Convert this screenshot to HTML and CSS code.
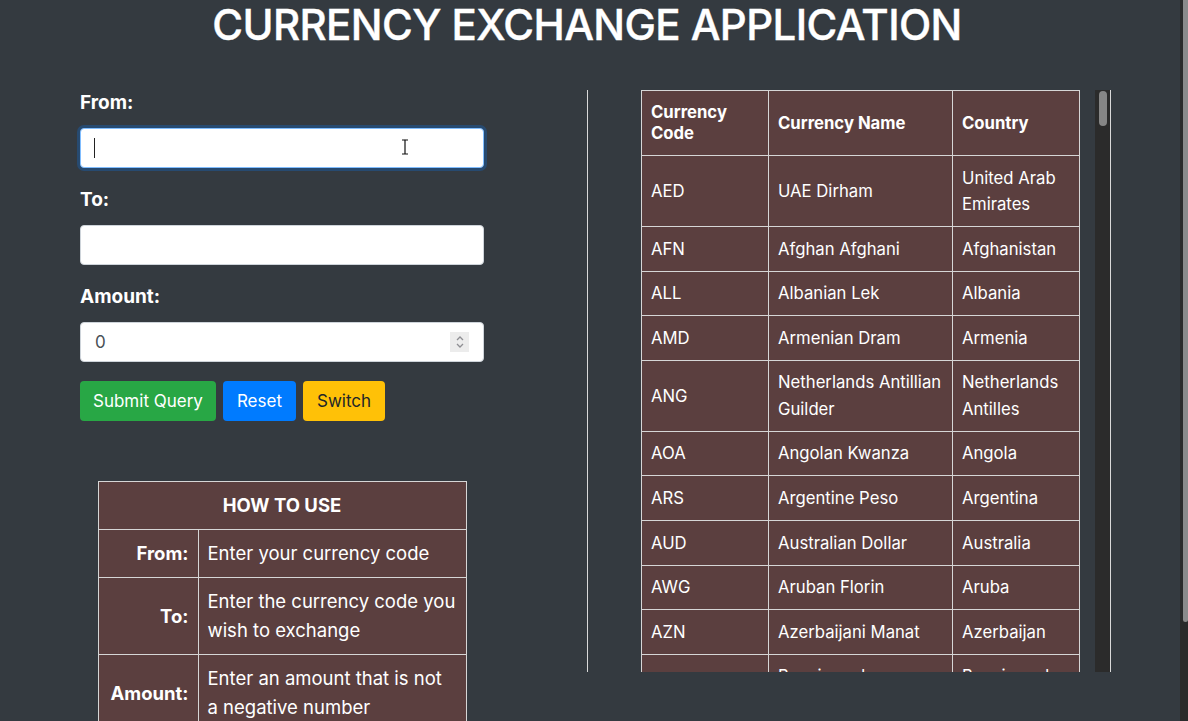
FILE: index.html
```html
<!DOCTYPE html>
<html lang="en">
<head>
<meta charset="utf-8">
<title>Currency Exchange Application</title>
<link rel="stylesheet" href="styles.css">
</head>
<body>
<div class="page-scroll"><div class="page-thumb"></div></div>
<h1 class="title">CURRENCY EXCHANGE APPLICATION</h1>
<main class="layout">
  <section class="left">
    <div class="left-inner">
      <form class="form">
        <div class="group">
          <label class="label" for="from">From:</label>
          <div class="field-wrap">
            <input class="field field-focus" id="from" type="text">
            <span class="caret"></span>
            <svg class="ibeam" width="8" height="16" viewBox="0 0 8 16"><path d="M1 1h2.5l.5.5.5-.5H7M4 1.5v13M1 15h2.5l.5-.5.5.5H7" fill="none" stroke="#111" stroke-width="1.2"/></svg>
          </div>
        </div>
        <div class="group">
          <label class="label" for="to">To:</label>
          <div class="field-wrap">
            <input class="field" id="to" type="text">
          </div>
        </div>
        <div class="group">
          <label class="label" for="amount">Amount:</label>
          <div class="field-wrap">
            <input class="field" id="amount" type="number" value="0">
            <span class="spin"><svg width="10" height="16" viewBox="0 0 10 16"><path d="M2 6l3-3 3 3M2 10l3 3 3-3" fill="none" stroke="#8e8e93" stroke-width="1.3"/></svg></span>
          </div>
        </div>
        <div class="buttons">
          <button type="button" class="btn btn-green">Submit Query</button>
          <button type="button" class="btn btn-blue">Reset</button>
          <button type="button" class="btn btn-yellow">Switch</button>
        </div>
      </form>
      <table class="howto">
        <tr><th colspan="2" class="howto-head">HOW TO USE</th></tr>
        <tr><th class="howto-key">From:</th><td>Enter your currency code</td></tr>
        <tr><th class="howto-key">To:</th><td>Enter the currency code you wish to exchange</td></tr>
        <tr><th class="howto-key">Amount:</th><td>Enter an amount that is not a negative number</td></tr>
      </table>
    </div>
  </section>
  <section class="right">
    <div class="scroller">
      <table class="codes">
        <thead>
          <tr><th class="c1">Currency Code</th><th class="c2">Currency Name</th><th class="c3">Country</th></tr>
        </thead>
        <tbody>
<tr><td>AED</td><td>UAE Dirham</td><td>United Arab Emirates</td></tr>
<tr><td>AFN</td><td>Afghan Afghani</td><td>Afghanistan</td></tr>
<tr><td>ALL</td><td>Albanian Lek</td><td>Albania</td></tr>
<tr><td>AMD</td><td>Armenian Dram</td><td>Armenia</td></tr>
<tr><td>ANG</td><td>Netherlands Antillian Guilder</td><td>Netherlands Antilles</td></tr>
<tr><td>AOA</td><td>Angolan Kwanza</td><td>Angola</td></tr>
<tr><td>ARS</td><td>Argentine Peso</td><td>Argentina</td></tr>
<tr><td>AUD</td><td>Australian Dollar</td><td>Australia</td></tr>
<tr><td>AWG</td><td>Aruban Florin</td><td>Aruba</td></tr>
<tr><td>AZN</td><td>Azerbaijani Manat</td><td>Azerbaijan</td></tr>
<tr><td>BAM</td><td>Bosnia and Herzegovina Mark</td><td>Bosnia and Herzegovina</td></tr>
<tr><td>BBD</td><td>Barbados Dollar</td><td>Barbados</td></tr>
<tr><td>BDT</td><td>Bangladeshi Taka</td><td>Bangladesh</td></tr>
<tr><td>BGN</td><td>Bulgarian Lev</td><td>Bulgaria</td></tr>
<tr><td>BHD</td><td>Bahraini Dinar</td><td>Bahrain</td></tr>
<tr><td>BIF</td><td>Burundian Franc</td><td>Burundi</td></tr>
<tr><td>BMD</td><td>Bermudian Dollar</td><td>Bermuda</td></tr>
<tr><td>BND</td><td>Brunei Dollar</td><td>Brunei</td></tr>
<tr><td>BOB</td><td>Bolivian Boliviano</td><td>Bolivia</td></tr>
<tr><td>BRL</td><td>Brazilian Real</td><td>Brazil</td></tr>
<tr><td>BSD</td><td>Bahamian Dollar</td><td>Bahamas</td></tr>
<tr><td>BTN</td><td>Bhutanese Ngultrum</td><td>Bhutan</td></tr>
<tr><td>BWP</td><td>Botswana Pula</td><td>Botswana</td></tr>
<tr><td>BYN</td><td>Belarusian Ruble</td><td>Belarus</td></tr>
<tr><td>BZD</td><td>Belize Dollar</td><td>Belize</td></tr>
<tr><td>CAD</td><td>Canadian Dollar</td><td>Canada</td></tr>
<tr><td>CDF</td><td>Congolese Franc</td><td>Democratic Republic of the Congo</td></tr>
<tr><td>CHF</td><td>Swiss Franc</td><td>Switzerland</td></tr>
<tr><td>CLP</td><td>Chilean Peso</td><td>Chile</td></tr>
<tr><td>CNY</td><td>Chinese Renminbi</td><td>China</td></tr>
<tr><td>COP</td><td>Colombian Peso</td><td>Colombia</td></tr>
<tr><td>CRC</td><td>Costa Rican Colon</td><td>Costa Rica</td></tr>
<tr><td>CUP</td><td>Cuban Peso</td><td>Cuba</td></tr>
<tr><td>CVE</td><td>Cape Verdean Escudo</td><td>Cape Verde</td></tr>
<tr><td>CZK</td><td>Czech Koruna</td><td>Czech Republic</td></tr>
<tr><td>DJF</td><td>Djiboutian Franc</td><td>Djibouti</td></tr>
<tr><td>DKK</td><td>Danish Krone</td><td>Denmark</td></tr>
<tr><td>DOP</td><td>Dominican Peso</td><td>Dominican Republic</td></tr>
<tr><td>DZD</td><td>Algerian Dinar</td><td>Algeria</td></tr>
<tr><td>EGP</td><td>Egyptian Pound</td><td>Egypt</td></tr>
<tr><td>ERN</td><td>Eritrean Nakfa</td><td>Eritrea</td></tr>
<tr><td>ETB</td><td>Ethiopian Birr</td><td>Ethiopia</td></tr>
<tr><td>EUR</td><td>Euro</td><td>European Union</td></tr>
<tr><td>FJD</td><td>Fiji Dollar</td><td>Fiji</td></tr>
<tr><td>FKP</td><td>Falkland Islands Pound</td><td>Falkland Islands</td></tr>
<tr><td>FOK</td><td>Faroese Króna</td><td>Faroe Islands</td></tr>
<tr><td>GBP</td><td>Pound Sterling</td><td>United Kingdom</td></tr>
<tr><td>GEL</td><td>Georgian Lari</td><td>Georgia</td></tr>
<tr><td>GGP</td><td>Guernsey Pound</td><td>Guernsey</td></tr>
<tr><td>GHS</td><td>Ghanaian Cedi</td><td>Ghana</td></tr>
<tr><td>GIP</td><td>Gibraltar Pound</td><td>Gibraltar</td></tr>
<tr><td>GMD</td><td>Gambian Dalasi</td><td>The Gambia</td></tr>
<tr><td>GNF</td><td>Guinean Franc</td><td>Guinea</td></tr>
<tr><td>GTQ</td><td>Guatemalan Quetzal</td><td>Guatemala</td></tr>
<tr><td>GYD</td><td>Guyanese Dollar</td><td>Guyana</td></tr>
<tr><td>HKD</td><td>Hong Kong Dollar</td><td>Hong Kong</td></tr>
<tr><td>HNL</td><td>Honduran Lempira</td><td>Honduras</td></tr>
<tr><td>HRK</td><td>Croatian Kuna</td><td>Croatia</td></tr>
<tr><td>HTG</td><td>Haitian Gourde</td><td>Haiti</td></tr>
<tr><td>HUF</td><td>Hungarian Forint</td><td>Hungary</td></tr>
<tr><td>IDR</td><td>Indonesian Rupiah</td><td>Indonesia</td></tr>
<tr><td>ILS</td><td>Israeli New Shekel</td><td>Israel</td></tr>
<tr><td>IMP</td><td>Manx Pound</td><td>Isle of Man</td></tr>
<tr><td>INR</td><td>Indian Rupee</td><td>India</td></tr>
<tr><td>IQD</td><td>Iraqi Dinar</td><td>Iraq</td></tr>
<tr><td>IRR</td><td>Iranian Rial</td><td>Iran</td></tr>
<tr><td>ISK</td><td>Icelandic Króna</td><td>Iceland</td></tr>
<tr><td>JEP</td><td>Jersey Pound</td><td>Jersey</td></tr>
<tr><td>JMD</td><td>Jamaican Dollar</td><td>Jamaica</td></tr>
<tr><td>JOD</td><td>Jordanian Dinar</td><td>Jordan</td></tr>
<tr><td>JPY</td><td>Japanese Yen</td><td>Japan</td></tr>
<tr><td>KES</td><td>Kenyan Shilling</td><td>Kenya</td></tr>
<tr><td>KGS</td><td>Kyrgyzstani Som</td><td>Kyrgyzstan</td></tr>
<tr><td>KHR</td><td>Cambodian Riel</td><td>Cambodia</td></tr>
<tr><td>KID</td><td>Kiribati Dollar</td><td>Kiribati</td></tr>
<tr><td>KMF</td><td>Comorian Franc</td><td>Comoros</td></tr>
<tr><td>KRW</td><td>South Korean Won</td><td>South Korea</td></tr>
<tr><td>KWD</td><td>Kuwaiti Dinar</td><td>Kuwait</td></tr>
<tr><td>KYD</td><td>Cayman Islands Dollar</td><td>Cayman Islands</td></tr>
<tr><td>KZT</td><td>Kazakhstani Tenge</td><td>Kazakhstan</td></tr>
<tr><td>LAK</td><td>Lao Kip</td><td>Laos</td></tr>
<tr><td>LBP</td><td>Lebanese Pound</td><td>Lebanon</td></tr>
<tr><td>LKR</td><td>Sri Lanka Rupee</td><td>Sri Lanka</td></tr>
<tr><td>LRD</td><td>Liberian Dollar</td><td>Liberia</td></tr>
<tr><td>LSL</td><td>Lesotho Loti</td><td>Lesotho</td></tr>
<tr><td>LYD</td><td>Libyan Dinar</td><td>Libya</td></tr>
<tr><td>MAD</td><td>Moroccan Dirham</td><td>Morocco</td></tr>
<tr><td>MDL</td><td>Moldovan Leu</td><td>Moldova</td></tr>
<tr><td>MGA</td><td>Malagasy Ariary</td><td>Madagascar</td></tr>
<tr><td>MKD</td><td>Macedonian Denar</td><td>North Macedonia</td></tr>
<tr><td>MMK</td><td>Burmese Kyat</td><td>Myanmar</td></tr>
<tr><td>MNT</td><td>Mongolian Tögrög</td><td>Mongolia</td></tr>
<tr><td>MOP</td><td>Macanese Pataca</td><td>Macau</td></tr>
<tr><td>MRU</td><td>Mauritanian Ouguiya</td><td>Mauritania</td></tr>
<tr><td>MUR</td><td>Mauritian Rupee</td><td>Mauritius</td></tr>
<tr><td>MVR</td><td>Maldivian Rufiyaa</td><td>Maldives</td></tr>
<tr><td>MWK</td><td>Malawian Kwacha</td><td>Malawi</td></tr>
<tr><td>MXN</td><td>Mexican Peso</td><td>Mexico</td></tr>
<tr><td>MYR</td><td>Malaysian Ringgit</td><td>Malaysia</td></tr>
<tr><td>MZN</td><td>Mozambican Metical</td><td>Mozambique</td></tr>
<tr><td>NAD</td><td>Namibian Dollar</td><td>Namibia</td></tr>
<tr><td>NGN</td><td>Nigerian Naira</td><td>Nigeria</td></tr>
<tr><td>NIO</td><td>Nicaraguan Córdoba</td><td>Nicaragua</td></tr>
<tr><td>NOK</td><td>Norwegian Krone</td><td>Norway</td></tr>
<tr><td>NPR</td><td>Nepalese Rupee</td><td>Nepal</td></tr>
<tr><td>NZD</td><td>New Zealand Dollar</td><td>New Zealand</td></tr>
<tr><td>OMR</td><td>Omani Rial</td><td>Oman</td></tr>
<tr><td>PAB</td><td>Panamanian Balboa</td><td>Panama</td></tr>
<tr><td>PEN</td><td>Peruvian Sol</td><td>Peru</td></tr>
<tr><td>PGK</td><td>Papua New Guinean Kina</td><td>Papua New Guinea</td></tr>
<tr><td>PHP</td><td>Philippine Peso</td><td>Philippines</td></tr>
<tr><td>PKR</td><td>Pakistani Rupee</td><td>Pakistan</td></tr>
<tr><td>PLN</td><td>Polish Złoty</td><td>Poland</td></tr>
<tr><td>PYG</td><td>Paraguayan Guaraní</td><td>Paraguay</td></tr>
<tr><td>QAR</td><td>Qatari Riyal</td><td>Qatar</td></tr>
<tr><td>RON</td><td>Romanian Leu</td><td>Romania</td></tr>
<tr><td>RSD</td><td>Serbian Dinar</td><td>Serbia</td></tr>
<tr><td>RUB</td><td>Russian Ruble</td><td>Russia</td></tr>
<tr><td>RWF</td><td>Rwandan Franc</td><td>Rwanda</td></tr>
<tr><td>SAR</td><td>Saudi Riyal</td><td>Saudi Arabia</td></tr>
<tr><td>SBD</td><td>Solomon Islands Dollar</td><td>Solomon Islands</td></tr>
<tr><td>SCR</td><td>Seychellois Rupee</td><td>Seychelles</td></tr>
<tr><td>SDG</td><td>Sudanese Pound</td><td>Sudan</td></tr>
<tr><td>SEK</td><td>Swedish Krona</td><td>Sweden</td></tr>
<tr><td>SGD</td><td>Singapore Dollar</td><td>Singapore</td></tr>
<tr><td>SHP</td><td>Saint Helena Pound</td><td>Saint Helena</td></tr>
<tr><td>SLE</td><td>Sierra Leonean Leone</td><td>Sierra Leone</td></tr>
<tr><td>SOS</td><td>Somali Shilling</td><td>Somalia</td></tr>
<tr><td>SRD</td><td>Surinamese Dollar</td><td>Suriname</td></tr>
<tr><td>SSP</td><td>South Sudanese Pound</td><td>South Sudan</td></tr>
<tr><td>STN</td><td>São Tomé and Príncipe Dobra</td><td>São Tomé and Príncipe</td></tr>
<tr><td>SYP</td><td>Syrian Pound</td><td>Syria</td></tr>
<tr><td>SZL</td><td>Eswatini Lilangeni</td><td>Eswatini</td></tr>
<tr><td>THB</td><td>Thai Baht</td><td>Thailand</td></tr>
<tr><td>TJS</td><td>Tajikistani Somoni</td><td>Tajikistan</td></tr>
<tr><td>TMT</td><td>Turkmenistan Manat</td><td>Turkmenistan</td></tr>
<tr><td>TND</td><td>Tunisian Dinar</td><td>Tunisia</td></tr>
<tr><td>TOP</td><td>Tongan Paʻanga</td><td>Tonga</td></tr>
<tr><td>TRY</td><td>Turkish Lira</td><td>Turkey</td></tr>
<tr><td>TTD</td><td>Trinidad and Tobago Dollar</td><td>Trinidad and Tobago</td></tr>
<tr><td>TVD</td><td>Tuvaluan Dollar</td><td>Tuvalu</td></tr>
<tr><td>TWD</td><td>New Taiwan Dollar</td><td>Taiwan</td></tr>
<tr><td>TZS</td><td>Tanzanian Shilling</td><td>Tanzania</td></tr>
<tr><td>UAH</td><td>Ukrainian Hryvnia</td><td>Ukraine</td></tr>
<tr><td>UGX</td><td>Ugandan Shilling</td><td>Uganda</td></tr>
<tr><td>USD</td><td>United States Dollar</td><td>United States</td></tr>
<tr><td>UYU</td><td>Uruguayan Peso</td><td>Uruguay</td></tr>
<tr><td>UZS</td><td>Uzbekistani So'm</td><td>Uzbekistan</td></tr>
<tr><td>VES</td><td>Venezuelan Bolívar Soberano</td><td>Venezuela</td></tr>
<tr><td>VND</td><td>Vietnamese Đồng</td><td>Vietnam</td></tr>
<tr><td>VUV</td><td>Vanuatu Vatu</td><td>Vanuatu</td></tr>
<tr><td>WST</td><td>Samoan Tālā</td><td>Samoa</td></tr>
<tr><td>XAF</td><td>Central African CFA Franc</td><td>CEMAC</td></tr>
<tr><td>XCD</td><td>East Caribbean Dollar</td><td>Organisation of Eastern Caribbean States</td></tr>
<tr><td>XDR</td><td>Special Drawing Rights</td><td>International Monetary Fund</td></tr>
<tr><td>XOF</td><td>West African CFA franc</td><td>CFA</td></tr>
<tr><td>XPF</td><td>CFP Franc</td><td>Collectivités d'Outre-Mer</td></tr>
<tr><td>YER</td><td>Yemeni Rial</td><td>Yemen</td></tr>
<tr><td>ZAR</td><td>South African Rand</td><td>South Africa</td></tr>
<tr><td>ZMW</td><td>Zambian Kwacha</td><td>Zambia</td></tr>
<tr><td>ZWL</td><td>Zimbabwean Dollar</td><td>Zimbabwe</td></tr>
        </tbody>
      </table>
    </div>
    <div class="vscroll"><div class="vthumb"></div></div>
  </section>
</main>
</body>
</html>
```
FILE: styles.css
```css
html { scrollbar-width: none; }
html::-webkit-scrollbar { display: none; }

body {
  margin: 0;
  background: #343a40;
  color: #fff;
  font-family: Inter, "Noto Sans", "Liberation Sans", sans-serif;
  font-size: 17px;
}

/* browser page scrollbar (drawn, sits over the page edge) */
.page-scroll {
  position: fixed;
  top: 0;
  right: 0;
  width: 8px;
  height: 100%;
  background: #2b2b2b;
  z-index: 5;
}
.page-thumb {
  margin-left: 3px;
  width: 5px;
  height: 622px;
  background: #8b8b8b;
  border-radius: 0 0 3px 3px;
}

.title {
  margin: 0 14px 0 0;
  text-align: center;
  font-size: 42px;
  font-weight: 500;
  line-height: 50px;
  letter-spacing: -0.6px;
  -webkit-text-stroke: 0.4px #fff;
}

.layout {
  display: flex;
  align-items: flex-start;
  padding-top: 40px;
}

.left {
  width: 587px;
  box-sizing: border-box;
  padding-left: 80px;
  flex-shrink: 0;
}

.left-inner { width: 404px; }

.group { margin-bottom: 19px; }

.label {
  display: block;
  font-weight: 700;
  font-size: 19px;
  line-height: 26px;
  margin-bottom: 12px;
  padding-top: 1px;
  margin-top: -1px;
}

.field-wrap { position: relative; }

.field {
  display: block;
  width: 100%;
  height: 40px;
  box-sizing: border-box;
  border: 1px solid #ced4da;
  border-radius: 4px;
  background: #fff;
  padding: 6px 14px;
  font-family: inherit;
  font-size: 17px;
  color: #495057;
  outline: none;
  -moz-appearance: textfield;
}
.field::-webkit-inner-spin-button,
.field::-webkit-outer-spin-button { -webkit-appearance: none; margin: 0; }

.field-focus {
  border-color: #80bdff;
  box-shadow: 0 0 0 3px rgba(0, 123, 255, 0.25);
}

.caret {
  position: absolute;
  left: 14px;
  top: 10px;
  width: 1px;
  height: 20px;
  background: #222;
}

.ibeam {
  position: absolute;
  left: 321px;
  top: 11px;
}

.spin {
  position: absolute;
  right: 15px;
  top: 10px;
  width: 19px;
  height: 20px;
  background: #ececec;
  display: flex;
  align-items: center;
  justify-content: center;
}

.buttons {
  display: flex;
  gap: 7px;
}

.btn {
  height: 40px;
  border: 1px solid transparent;
  border-radius: 4px;
  padding: 0 12px;
  font-family: inherit;
  font-size: 17px;
  color: #fff;
  cursor: pointer;
}
.btn-green { background: #28a745; }
.btn-blue { background: #007bff; padding: 0 13px; }
.btn-yellow { background: #ffc107; color: #212529; padding: 0 13px; }

.howto {
  margin: 60px auto 0;
  width: 369px;
  border-collapse: collapse;
  background: #5b3f3f;
  font-size: 18.5px;
  line-height: 29px;
}
.howto th, .howto td {
  border: 1px solid #d6d6d6;
  padding: 9px 9px;
  vertical-align: middle;
}
.howto-head { text-align: center; font-weight: 700; }
.howto-key { width: 81px; text-align: right; font-weight: 700; }
.howto td { text-align: left; }

.right {
  display: flex;
  height: 582px;
  width: 524px;
  box-sizing: border-box;
  border-left: 1px solid #d9d9d9;
  border-right: 1px solid #d9d9d9;
  flex-shrink: 0;
}

.scroller {
  flex: 1;
  height: 100%;
  overflow: hidden;
  padding-left: 53px;
  box-sizing: border-box;
}

.vscroll {
  width: 15px;
  height: 100%;
  background: #2b2b2b;
  box-sizing: border-box;
  padding: 1px 3px 0 4px;
  flex-shrink: 0;
}
.vthumb {
  height: 35px;
  background: #868686;
  border-radius: 4px;
}

.codes {
  width: 438px;
  border-collapse: collapse;
  background: #5b3f3f;
  font-size: 16.7px;
  table-layout: fixed;
}
.codes th, .codes td {
  border: 1px solid #d6d6d6;
  text-align: left;
  vertical-align: middle;
}
.codes th {
  padding: 11px 9px;
  line-height: 21px;
  font-weight: 700;
  box-sizing: border-box;
}
.codes td {
  padding: 8.6px 9px;
  line-height: 26.4px;
}
.c1 { width: 127px; }
.c2 { width: 184px; }
.c3 { width: 127px; }
```
